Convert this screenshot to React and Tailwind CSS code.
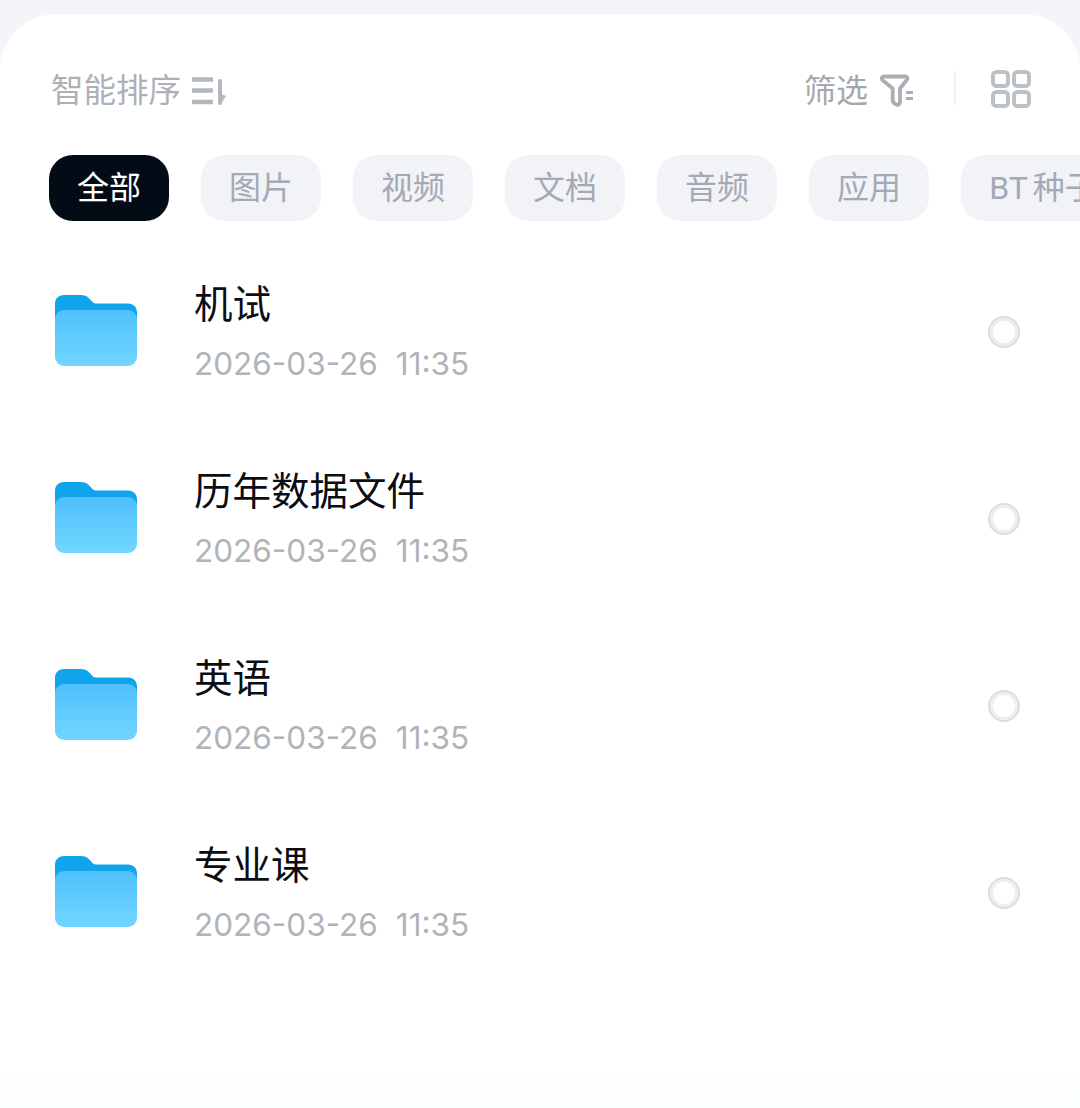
import React from 'react';

const FONT = "font-['Roboto','Noto_Sans_CJK_SC',sans-serif]";
const DATE_FONT = "font-['Inter','Noto_Sans_CJK_SC',sans-serif]";

const tabs = ['全部', '图片', '视频', '文档', '音频', '应用', 'BT种子'];

const files = [
  { name: '机试', date: '2026-03-26', time: '11:35' },
  { name: '历年数据文件', date: '2026-03-26', time: '11:35' },
  { name: '英语', date: '2026-03-26', time: '11:35' },
  { name: '专业课', date: '2026-03-26', time: '11:35' }
];

const SortIcon = () => (
  <svg width="38" height="32" viewBox="0 0 38 32" fill="none" className="ml-[9px]">
    <path d="M2 4.500h21M2 15.500h21M2 27h21" stroke="#b3b8bd" strokeWidth="4.500" />
    <path d="M30 6v22" stroke="#b3b8bd" strokeWidth="4" strokeLinecap="round" />
    <path d="M31 19v10l5-8z" fill="#b3b8bd" />
  </svg>
);

const FilterIcon = () => (
  <svg width="36" height="34" viewBox="0 0 36 34" fill="none" className="ml-[12px]">
    <path
      d="M4 2.500h21c2 0 3 1.800 1.800 3.400l-6.800 8.600v13.500c0 2.400-2 3.600-3.800 2.400l-2-1.300c-1-.7-1.500-1.600-1.500-2.800V14.500L2.200 5.900C1 4.300 2 2.500 4 2.500z"
      stroke="#a9aeb4"
      strokeWidth="3.800"
      strokeLinejoin="round"
    />
    <path d="M26 18.500h7M26 24.500h7" stroke="#a9aeb4" strokeWidth="3" />
  </svg>
);

const GridIcon = () => (
  <svg width="40" height="38" viewBox="0 0 40 38" fill="none">
    <rect x="2" y="2" width="15" height="14" rx="3.500" stroke="#bcc1c6" strokeWidth="4" />
    <rect x="23" y="2" width="15" height="14" rx="3.500" stroke="#bcc1c6" strokeWidth="4" />
    <rect x="2" y="22" width="15" height="14" rx="3.500" stroke="#bcc1c6" strokeWidth="4" />
    <rect x="23" y="22" width="15" height="14" rx="3.500" stroke="#bcc1c6" strokeWidth="4" />
  </svg>
);

const FolderIcon = () => (
  <svg width="82" height="72" viewBox="0 0 82 72" className="shrink-0">
    <defs>
      <linearGradient id="folderFront" x1="0" y1="0" x2="0" y2="1">
        <stop offset="0" stopColor="#4fc0fd" />
        <stop offset="1" stopColor="#71d6fe" />
      </linearGradient>
    </defs>
    <path
      d="M0 10C0 4.500 3.500 1 9 1h17c3.500 0 5.500.8 7.500 2.800L38 8.500c1 .8 2 1 3.500 1H73c5.500 0 9 3.500 9 9V30H0z"
      fill="#0ea5ec"
    />
    <rect x="0" y="16" width="82" height="56" rx="9" fill="url(#folderFront)" />
  </svg>
);

const FileRow = ({ name, date, time }) => (
  <div className="flex h-[187px] items-start pl-[55px] pr-[60px]">
    <div className="mt-[68px]">
      <FolderIcon />
    </div>
    <div className="ml-[57px] mt-[51px] flex-1">
      <div className="text-[38.500px] leading-[56px] text-[#0a0d12]">{name}</div>
      <div className={`mt-[6px] flex text-[31.500px] leading-[50px] text-[#b0b4b9] ${DATE_FONT}`}>
        <span>{date}</span>
        <span className="ml-[18px]">{time}</span>
      </div>
    </div>
    <div className="mt-[90px] h-[32px] w-[32px] rounded-full border-[2px] border-[#dcdcdc] shadow-[inset_0_0_0_3px_#eeeeee]" />
  </div>
);

const App = () => {
  return (
    <div className={`h-[1108px] w-[1080px] overflow-hidden bg-[#f3f5f9] pt-[14px] ${FONT}`}>
      <div className="h-[1094px] rounded-t-[56px] bg-gradient-to-b from-white from-[96%] to-[#fafefd]">
        <div className="flex h-[141px] items-start pl-[51px] pr-[49px] pt-[55px]">
          <div className="flex items-center text-[32.500px] leading-[44px] text-[#adb1b6]">
            智能排序
            <SortIcon />
          </div>
          <div className="ml-auto flex items-center text-[32px] leading-[44px] text-[#a4a8ad]">
            筛选
            <FilterIcon />
          </div>
          <div className="ml-[38px] mt-[2px] h-[34px] w-[2px] bg-[#f0f1f3]" />
          <div className="ml-[35px] mt-[1px]">
            <GridIcon />
          </div>
        </div>

        <div className="flex gap-[32px] overflow-hidden pl-[49px]">
          {tabs.map((tab, i) => (
            <div
              key={tab}
              className={`flex h-[66px] shrink-0 items-center justify-center rounded-[24px] text-[32px] ${
                i === 0 ? 'bg-[#030b17] text-white' : 'bg-[#f1f3f7] text-[#a5a9b5]'
              } ${tab === 'BT种子' ? 'w-[164px]' : 'w-[120px]'}`}
            >
              {tab === 'BT种子' ? (
                <span>
                  BT<span className="ml-[5px]">种子</span>
                </span>
              ) : (
                tab
              )}
            </div>
          ))}
        </div>

        <div className="mt-[5px]">
          {files.map((f) => (
            <FileRow key={f.name} name={f.name} date={f.date} time={f.time} />
          ))}
        </div>
      </div>
    </div>
  );
};

export default App;
